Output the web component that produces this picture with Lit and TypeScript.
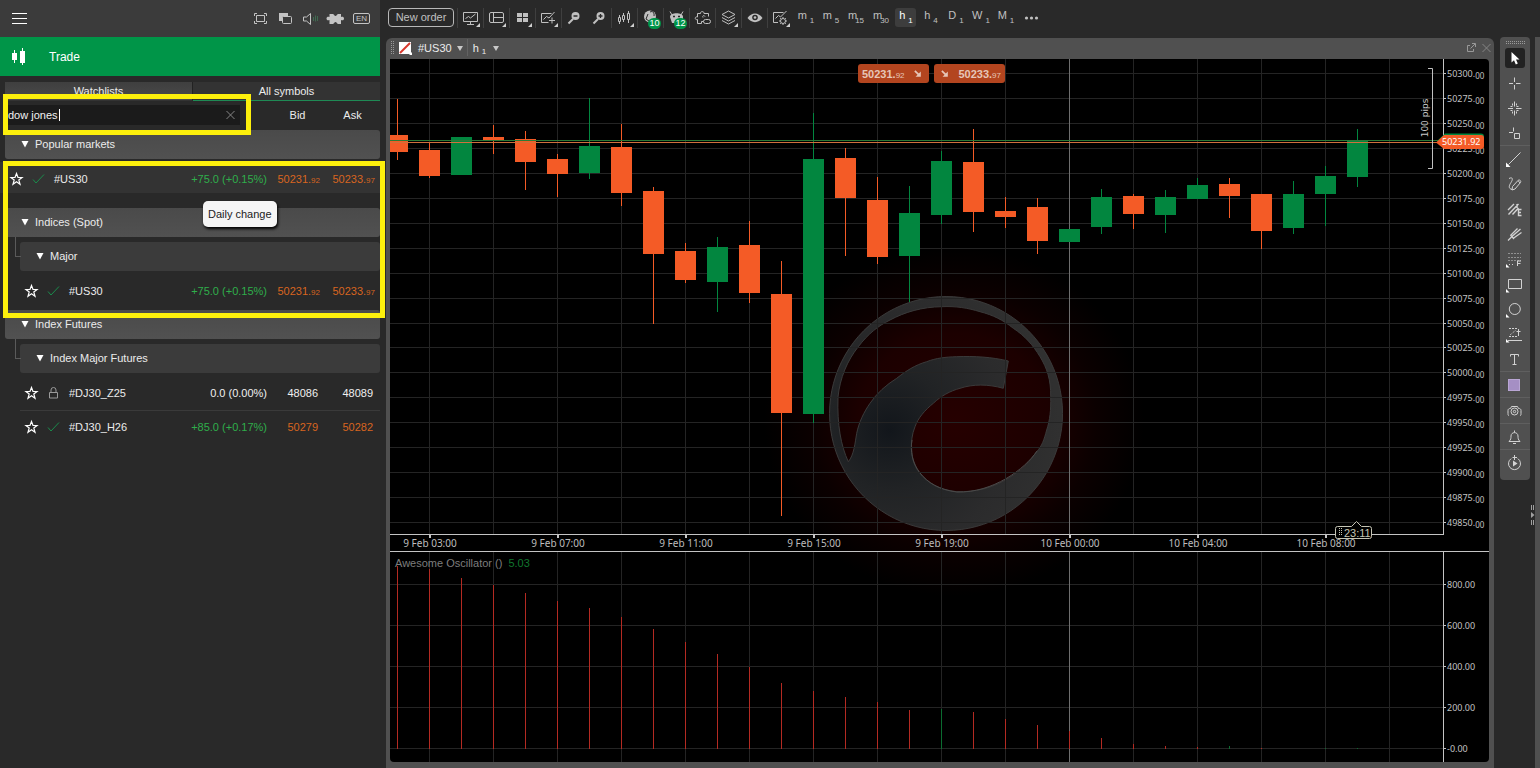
import { LitElement, html, svg, css, nothing } from "lit";
import { customElement, property } from "lit/decorators.js";
import { classMap } from "lit/directives/class-map.js";

/* ---------- icons, 20x20 grid ---------- */

const corner = svg`<path d="M19 15v4h-4z" fill="#d0d0d0" stroke="none"/>`;
const leftCorner = svg`<path d="M1 15v3.500h3.500z" fill="#fff" stroke="none"/>`;

const icons: Record<string, unknown> = {
  menu: svg`<path d="M3 4.500h15M3 9.500h15M3 14.500h15" stroke="#fff"/>`,
  fullscreen: svg`<path d="M6.500 6.500h8v6h-8zM4.500 7V4.500H7M14 4.500h2.500V7M16.500 12v2.500H14M7 14.500H4.500V12"/>`,
  detach: svg`<rect x="4" y="4" width="9" height="8" fill="currentColor" stroke="none"/><rect x="7.500" y="7.500" width="9" height="7" rx="1" fill="#3b3b3b"/>`,
  sound: svg`<path d="M3.500 8v4h3l4 3.500v-11l-4 3.500z"/><path d="M13.500 8v4M15.500 6.500v6M17.500 7v5" stroke="#3f6a50"/>`,
  puzzle: svg`<path d="M4.500 5H8c1.200.2 1.200 2 2.500 2s1.300-1.800 2.500-2h3v3c1-.6 3-.6 3 1.500s-2 2.100-3 1.500V15h-3c-1.200-.2-1.200-2-2.500-2s-1.300 1.800-2.500 2H4.500v-4c-1 .6-3 .6-3-1.500S3.500 7.400 4.500 8z" fill="currentColor" stroke="none"/>`,
  candles: svg`<path d="M5.500 3v13M13.500 1v17" stroke="#fff"/><path d="M3 6h5v7H3zM11 4h5v12h-5z" fill="#fff" stroke="none"/>`,
  star: svg`<path d="M9.500 4.500l1.500 4h4l-3.200 2.500 1.200 4.200-3.500-2.500-3.500 2.500 1.200-4.200-3.200-2.500h4z" stroke="#fff" stroke-width="1.200"/>`,
  check: svg`<path d="M4 10.500l3 3.500 8-8.500" stroke="#1a8c4c"/>`,
  lock: svg`<path d="M5.500 9.500h8v5.500h-8zM7 9.500V7a2.500 2.500 0 0 1 5 0v2.500" stroke="#9a9a9a"/>`,
  clear: svg`<path d="M6.500 6l8 8M14.500 6l-8 8" stroke="#858585"/>`,
  screen: svg`<path d="M2.500 4.500h14v9h-14zM9.500 14v2.500M6 16.500h7"/><path d="M4.500 10.500l3-2 2 1.500 5-4"/>${corner}`,
  layout: svg`<rect x="2.500" y="4.500" width="14" height="10" rx="1.500"/><path d="M6.500 4.500v10M6.500 9.500h10"/>${corner}`,
  tiles: svg`<path d="M4 5h5v4H4zM10 5h5v4h-5zM4 10h5v4H4zM10 10h5v4h-5z" fill="currentColor" stroke="none"/>${corner}`,
  indicator: svg`<path d="M9.500 14.500h-7v-9h10"/><path d="M4.500 11.500l3-3 2.500 1.500 5.500-6M13 9.500v6M10 12.500h6"/>${corner}`,
  zoomOut: svg`<circle cx="11.500" cy="8" r="4" fill="currentColor" stroke="none"/><path d="M9 11l-4.500 4.500" stroke-width="2"/><path d="M9.500 8h4" stroke="#292929" stroke-width="1.500"/>`,
  zoomIn: svg`<circle cx="11.500" cy="8" r="4" fill="currentColor" stroke="none"/><path d="M9 11l-4.500 4.500" stroke-width="2"/><path d="M9.500 8h4M11.500 6v4" stroke="#292929" stroke-width="1.300"/>`,
  chartType: svg`<path d="M4.500 7v9M8.500 5v9M13.500 3v12"/><path d="M3.500 9.500h2v4h-2zM7.500 7.500h2v4h-2zM12.500 5.500h2v6h-2z" fill="#292929"/>${corner}`,
  robots: svg`<circle cx="9" cy="8.500" r="6" fill="currentColor" stroke="none"/><path d="M9 4c3-1.500 4.500 1 4 4M7 6l-2 5 3 2" stroke="#292929"/>`,
  droid: svg`<path d="M3 9c0-5 13-5 13 0v6H5z" fill="currentColor" stroke="none"/><path d="M5 7L3 3.500M14 7l2-3.500"/><path d="M6 8.500h2M11 8.500h2" stroke="#292929" stroke-width="1.500"/>`,
  plugin: svg`<path d="M4.500 5.500h3c-.5-2.500 4-2.500 3.500 0h4.500v3M4.500 5.500V9c-3-1-3 3.500 0 2.500v4h4v-2h2"/><rect x="10.500" y="11.500" width="7" height="4" rx="2"/><path d="M12 8.500c-1-2-3-.5-2 1"/>`,
  layers: svg`<path d="M9.500 3l6.500 3.500-6.500 3.500-6.500-3.500zM3 9.500l6.500 3.500 6.500-3.500M3 12.500l6.500 3.500 6.500-3.500"/>${corner}`,
  eye: svg`<path d="M2.500 10c4-6 11-6 15 0-4 5.500-11 5.500-15 0z" fill="currentColor" stroke="none"/><circle cx="10" cy="9.500" r="2.800" fill="#292929" stroke="none"/><circle cx="10" cy="9.500" r="1.300" fill="currentColor" stroke="none"/>`,
  chartSettings: svg`<path d="M7 14.500H2.500v-10h10"/><path d="M4.500 10.500l3-3 2 1.500 6-6"/><circle cx="12" cy="13" r="2.500"/><path d="M12 9v1.500M12 15.500V17M8 13h1.500M14.500 13H16M9.200 10.200l1 1M13.800 14.800l1 1M14.800 10.200l-1 1M10.200 14.800l-1 1"/>${corner}`,
  more: svg`<circle cx="4.500" cy="10" r="1.600" fill="currentColor" stroke="none"/><circle cx="9.500" cy="10" r="1.600" fill="currentColor" stroke="none"/><circle cx="14.500" cy="10" r="1.600" fill="currentColor" stroke="none"/>`,
  popout: svg`<path d="M9 7.500H6.500v6h6V11M9.500 10.500l4.500-4.500M11 5.500h3.500V9"/>`,
  sell: svg`<path d="M5.500 5.500l5.500 5.500" stroke-width="2.500"/><path d="M14 6.500V14H6.500z" fill="currentColor" stroke="none"/>`,
  cursor: svg`<path d="M6.500 4v10.500l2.500-2.300 1.800 4.200 2-.9-1.800-4h3.500z" fill="#fff" stroke="none"/>`,
  cross: svg`<path d="M9.500 4.500v4.500M9.500 12v4.500M4 10.500h4M11 10.500h4.500"/>`,
  crossDots: svg`<path d="M9.500 3.500v5M9.500 12.500v5M3 10.500h5M11 10.500h5.500"/><path d="M7.500 5.500v3h-3M11.500 5.500v3h3M7.500 15.500v-3h-3M11.500 15.500v-3h3" stroke-dasharray="2 1"/>`,
  crossBox: svg`<path d="M8.500 4.500v4M4 9.500h4M9.500 10.500h5v5h-5z"/>`,
  line: svg`<path d="M3.500 15.500l12-12"/><path d="M1 13.500V18h4.500z" fill="#fff" stroke="none"/>`,
  pencil: svg`<path d="M4 4.500c4-2 4 1 2 4s-3 6 1 7M7.500 12.500l5.500-6c1.500-1.500 3.500.5 2.500 2L10 15l-3 1zM13 6.500l2 2.500"/>`,
  fib: svg`<path d="M3 11l6-6M3.500 15.500l10-10.500M7.500 15.500l6-6.500M12 5v4M16.500 10.500h-3v6h3M13.500 13.500h2.500" stroke-width="1.400"/>`,
  fork: svg`<path d="M3 16.500l5-5M5.500 11.500l7-7M8 14.500l8.500-6M7.500 12l8-7M5.500 11l3.500 4" stroke-width="1.300"/>`,
  fibLevels: svg`<path d="M3.500 4.500H16M3.500 8.500H16M3.500 11.500H16M4 15.500h6" stroke-dasharray="1 2"/><path d="M12.500 17v-5h3.500M12.500 14.500h3"/>${leftCorner}`,
  rect: svg`<path d="M3.500 5.500h13v9h-13z"/>${leftCorner}`,
  circle: svg`<circle cx="9.800" cy="10" r="5.500"/>${leftCorner}`,
  risk: svg`<path d="M4 4.500h8M4 12.500h8" stroke-dasharray="2 1"/><path d="M5 11l6-5" stroke-dasharray="1 1"/><path d="M13.500 12V5M11.500 7.500h4M3 16.500h14"/>${leftCorner}`,
  text: svg`<path d="M5.500 7.500v-2h8v2M9.500 5.500v10M7.500 15.500h4"/>`,
  swatch: svg`<rect x="3.500" y="4.500" width="11" height="11" fill="#a58fc4" stroke="#b9a6d4"/>`,
  camera: svg`<path d="M4 14.500c-1 0-1-1-1-2v-3c0-1.500 1-2 2.500-2l1-2h6l1 2c1.500 0 2.500.5 2.500 2v3c0 1 0 2-1 2"/><circle cx="9.500" cy="10.500" r="3.500"/><circle cx="9.500" cy="10.500" r="1.200"/>`,
  bell: svg`<path d="M4 14.500h11c-2-2-2-3.500-2-5.500 0-4.500-7-4.500-7 0 0 2 0 3.500-2 5.500zM8 16.500h3M9.500 3.500v2"/>`,
  replay: svg`<path d="M6.200 5.600a6 6 0 1 0 6.600 0M7.500 4.500h4.500M9.500 2v5"/><path d="M8 7.500l4.500 3-4.500 3z" fill="currentColor" stroke="none"/>`,
};

const icon = (name: string) =>
  html`<svg class="icon" viewBox="0 0 20 20" width="20" height="20" aria-hidden="true">${icons[name]}</svg>`;

const shared = css`
  * {
    box-sizing: border-box;
  }
  button {
    font: inherit;
    color: inherit;
    background: none;
    border: 0;
    padding: 0;
    cursor: pointer;
    display: flex;
    align-items: center;
    justify-content: center;
  }
  .icon {
    display: block;
    flex: none;
    fill: none;
    stroke: currentColor;
  }
  small {
    font-size: 8px;
  }
`;

/* ---------- left panel ---------- */

interface Quote {
  symbol: string;
  change: string;
  bid: [string, string?];
  ask: [string, string?];
  closed?: boolean;
  nested?: boolean;
}
interface Group {
  title: string;
  sub?: string;
  quotes: Quote[];
}

const us30: Quote = {
  symbol: "#US30",
  change: "+75.0 (+0.15%)",
  bid: ["50231.", "92"],
  ask: ["50233.", "97"],
};

const groups: Group[] = [
  { title: "Popular markets", quotes: [us30] },
  { title: "Indices (Spot)", sub: "Major", quotes: [{ ...us30, nested: true }] },
  {
    title: "Index Futures",
    sub: "Index Major Futures",
    quotes: [
      { symbol: "#DJ30_Z25", change: "0.0 (0.00%)", bid: ["48086"], ask: ["48089"], closed: true, nested: true },
      { symbol: "#DJ30_H26", change: "+85.0 (+0.17%)", bid: ["50279"], ask: ["50282"], nested: true },
    ],
  },
];

@customElement("trade-panel")
export class TradePanel extends LitElement {
  static styles = [
    shared,
    css`
      :host {
        display: block;
        position: relative;
        width: 380px;
        flex: none;
        color: #ececec;
      }
      .top {
        display: flex;
        align-items: center;
        gap: 5px;
        height: 37px;
        padding: 0 9px;
        background: #3b3b3b;
        color: #c4c4c4;
      }
      .menu {
        margin-right: auto;
      }
      .lang {
        width: 17px;
        height: 11px;
        margin: 0 1px 0 3px;
        border: 1px solid #c4c4c4;
        border-radius: 2px;
        font-size: 8px;
        line-height: 9px;
      }
      .trade {
        display: flex;
        align-items: center;
        gap: 20px;
        height: 39px;
        padding: 0 9px;
        background: #009548;
        color: #fff;
        font-size: 12px;
        font-weight: 400;
        margin: 0;
      }
      .tabs {
        display: flex;
        margin: 6px 0 0 5px;
      }
      .tab {
        flex: 1;
        height: 19px;
        background: #333;
        border-bottom: 1px solid #1f8a55;
      }
      .tab.first {
        background: linear-gradient(#3f3f3f, #4a4a4a);
        border-bottom-color: #333;
        border-right: 1px solid #222;
      }
      table {
        width: 100%;
        border-spacing: 0;
        table-layout: fixed;
      }
      th,
      td {
        padding: 0;
        font-weight: 400;
        text-align: left;
        white-space: nowrap;
      }
      .c-change {
        width: 90px;
      }
      .c-price {
        width: 55px;
      }
      thead th {
        height: 29px;
        padding-bottom: 1px;
      }
      .field {
        position: relative;
        display: flex;
        align-items: center;
        width: 232px;
        height: 20px;
        margin-left: 8px;
        background: #1b1b1b;
      }
      .field input {
        flex: 1;
        min-width: 0;
        height: 20px;
        padding: 0;
        border: 0;
        outline: 0;
        background: transparent;
        color: #f2f2f2;
        font: inherit;
      }
      .caret {
        position: absolute;
        left: 51px;
        top: 4px;
        width: 1px;
        height: 12px;
        background: #fff;
      }
      th.head {
        text-align: center;
      }
      .group {
        width: 100%;
        height: 29px;
        padding: 0 0 2px 15px;
        justify-content: flex-start;
        gap: 5px;
        background: linear-gradient(#4a4a4a, #515151);
        border-radius: 3px;
      }
      .arrow {
        width: 10px;
        height: 8px;
        fill: #fff;
      }
      .in {
        padding-left: 5px;
      }
      .sub {
        position: relative;
        padding: 5px 0 0 20px;
      }
      .sub::before {
        content: "";
        position: absolute;
        left: 15px;
        top: 0;
        width: 5px;
        height: 19px;
        border: solid #5a5a5a;
        border-width: 0 0 1px 1px;
      }
      .sub .group {
        background: #3b3b3b;
      }
      .gap td {
        height: 3px;
      }
      .gap.end td {
        height: 2px;
      }
      .gap.wide td {
        height: 12px;
      }
      .row td {
        height: 34px;
      }
      .lit td {
        background: linear-gradient(#333 31px, transparent 31px);
      }
      .row + .row td {
        background: linear-gradient(#3a3a3a 1px, transparent 1px) no-repeat;
      }
      .row + .row .name {
        background-position: 20px 0;
      }
      .cell {
        display: flex;
        align-items: center;
        gap: 2px;
        padding-left: 7px;
      }
      .nested .cell {
        padding-left: 22px;
      }
      .label {
        padding-left: 3px;
      }
      .num {
        text-align: right;
        padding-right: 7px;
        color: #d8651f;
      }
      .num.frac {
        padding-right: 5px;
      }
      .chg {
        text-align: right;
        padding-right: 3px;
        color: #2fae4b;
      }
      .closed .chg,
      .closed .num {
        color: #f0f0f0;
      }
      .tip {
        position: absolute;
        left: 203px;
        top: 201px;
        padding: 0 5px;
        height: 26px;
        line-height: 26px;
        border-radius: 5px;
        background: #f5f5f5;
        color: #222;
        box-shadow: 1px 2px 3px #000;
      }
      .mark {
        position: absolute;
        border: 5px solid #fdf00c;
        pointer-events: none;
      }
      .mark.search {
        left: 3px;
        top: 94px;
        width: 248px;
        height: 41px;
      }
      .mark.results {
        left: 3px;
        top: 161px;
        width: 382px;
        height: 157px;
        z-index: 2;
      }
    `,
  ];

  private groupButton(title: string) {
    return html`<button class="group">
      <svg class="arrow" viewBox="0 0 10 8" aria-hidden="true"><path d="M1.500 1h7L5 7.500z" /></svg>${title}
    </button>`;
  }

  private price(p: [string, string?]) {
    return html`<td class=${classMap({ num: true, frac: !!p[1] })}>${p[0]}${p[1] ? html`<small>${p[1]}</small>` : nothing}</td>`;
  }

  private row(q: Quote) {
    return html`<tr class=${classMap({ row: true, nested: !!q.nested, closed: !!q.closed, lit: !q.nested })}>
      <td class="name">
        <div class="cell">
          <button aria-label="Add to favourites">${icon("star")}</button>
          ${icon(q.closed ? "lock" : "check")}<span class="label">${q.symbol}</span>
        </div>
      </td>
      <td class="chg">${q.change}</td>
      ${this.price(q.bid)}${this.price(q.ask)}
    </tr>`;
  }

  render() {
    return html`
      <div class="top">
        <button class="menu" aria-label="Menu">${icon("menu")}</button>
        ${["fullscreen", "detach", "sound", "puzzle"].map((n) => html`<button aria-label=${n}>${icon(n)}</button>`)}
        <button class="lang">EN</button>
      </div>
      <h1 class="trade">${icon("candles")}Trade</h1>
      <div class="tabs">
        <button class="tab first">Watchlists</button>
        <button class="tab">All symbols</button>
      </div>
      <table>
        <colgroup>
          <col />
          <col class="c-change" />
          <col class="c-price" />
          <col class="c-price" />
        </colgroup>
        <thead>
          <tr>
            <th colspan="2">
              <div class="field">
                <input type="text" aria-label="Search symbols" value="dow jones" />
                <span class="caret"></span>
                <button aria-label="Clear">${icon("clear")}</button>
              </div>
            </th>
            <th class="head">Bid</th>
            <th class="head">Ask</th>
          </tr>
        </thead>
        <tbody>
          ${groups.map(
            (g) => html`
              <tr><td class="in" colspan="4">${this.groupButton(g.title)}</td></tr>
              ${g.sub ? html`<tr><td class="sub" colspan="4">${this.groupButton(g.sub)}</td></tr>` : nothing}
              <tr class="gap"><td colspan="4"></td></tr>
              ${g.quotes.map((q) => this.row(q))}
              <tr class=${classMap({ gap: true, end: !!g.sub, wide: !g.sub })}><td colspan="4"></td></tr>
            `
          )}
        </tbody>
      </table>
      <div class="tip" role="tooltip">Daily change</div>
      <div class="mark search"></div>
      <div class="mark results"></div>
    `;
  }
}

/* ---------- chart ---------- */

/* [body top, body bottom, high, low, rising] on the pane's pixel scale, oldest first */
const bars: [number, number, number, number, number][] = [
  [76, 93, 40, 101, 0], [91, 117, 84, 119, 0], [78, 116, 78, 116, 1], [78, 81, 66, 95, 0],
  [80, 103, 72, 131, 0], [100, 115, 95, 138, 0], [87, 114, 39, 120, 1], [88, 134, 65, 147, 0],
  [132, 195, 128, 265, 0], [192, 221, 184, 224, 0], [188, 223, 178, 253, 1], [186, 234, 162, 244, 0],
  [235, 354, 202, 457, 0], [100, 355, 54, 364, 1], [99, 139, 89, 197, 0], [141, 198, 118, 205, 0],
  [154, 197, 127, 243, 1], [102, 156, 92, 165, 1], [103, 153, 70, 173, 0], [152, 158, 138, 169, 0],
  [148, 182, 139, 195, 0], [170, 183, 170, 183, 1], [138, 168, 130, 175, 1], [137, 155, 135, 170, 0],
  [138, 156, 131, 174, 1], [126, 140, 119, 140, 1], [125, 137, 119, 159, 0], [135, 172, 135, 190, 0],
  [135, 169, 122, 175, 1], [117, 135, 107, 167, 1], [81, 118, 70, 128, 1],
];

const awesome = [
  183, 180, 171, 164, 156, 148, 141, 132, 120, 107, 95, 82, 66, 58, 52, 47, 39, -40, 37, 30, 24, 18, 11, 5, 3, 2, -3, 1, 0,
  -1, -1,
];

const times = [
  "9 Feb 03:00", "9 Feb 07:00", "9 Feb 11:00", "9 Feb 15:00", "9 Feb 19:00", "10 Feb 00:00", "10 Feb 04:00", "10 Feb 08:00",
];

const STEP = 32;
const LAST = -132;
const AXIS = -46;
const UP = "#02863f";
const DOWN = "#f45b26";

@customElement("price-chart")
export class PriceChart extends LitElement {
  static styles = [
    shared,
    css`
      :host {
        display: flex;
        flex-direction: column;
        flex: 1;
        min-width: 0;
        padding: 0 5px 6px 4px;
        background: #505050;
        border-radius: 6px 6px 0 0;
        color: #ececec;
      }
      .bar {
        display: flex;
        align-items: center;
        height: 21px;
        padding-bottom: 2px;
        flex: none;
      }
      .grip {
        width: 4px;
        height: 14px;
        background: conic-gradient(#9a9a9a 25%, transparent 0) 0 0 / 2px 2px;
      }
      .flag {
        width: 14px;
        height: 14px;
        margin: 0 6px 0 4px;
      }
      .pick {
        gap: 5px;
      }
      .tf {
        gap: 3px;
        margin-left: 4px;
        padding-left: 5px;
        border-left: 1px solid #626262;
      }
      .tf small {
        padding: 8px 4px 0 0;
      }
      .arrow {
        width: 6px;
        height: 6px;
        fill: #c8c8c8;
      }
      .spacer {
        flex: 1;
      }
      .win {
        color: #989898;
        width: 15px;
      }
      .win:last-child {
        margin-right: -4px;
      }
      .stage {
        position: relative;
        flex: 1;
        min-height: 620px;
        background: #000;
        border-radius: 0 4px 4px 4px;
        overflow: hidden;
      }
      .canvas {
        position: absolute;
        inset: 0;
        display: block;
        width: 100%;
        height: 100%;
      }
      .axis {
        font: 9px "Noto Sans", sans-serif;
        fill: #c2c2c2;
      }
      .time {
        font: 10px "Noto Sans", sans-serif;
        fill: #bdbdbd;
        text-anchor: middle;
      }
      .pips {
        font: 9px "DejaVu Sans", sans-serif;
        fill: #c8c8c8;
        text-anchor: middle;
      }
      .tag {
        font: 9px "Noto Sans", sans-serif;
        fill: #fff;
      }
      .clock {
        font: 11px "Liberation Sans", sans-serif;
        fill: #c4c4b4;
      }
      .minor {
        font-size: 8px;
      }
      .study {
        position: absolute;
        left: 5px;
        top: 497px;
        display: flex;
        gap: 6px;
        color: #7d7d7d;
        line-height: 14px;
      }
      .study span {
        color: #11762f;
      }
      .deal {
        position: absolute;
        left: 0;
        right: 16px;
        top: 5px;
        display: flex;
        justify-content: center;
        gap: 5px;
      }
      .deal button {
        width: 71px;
        height: 19px;
        padding: 0 4px;
        justify-content: space-between;
        border-radius: 3px;
        background: #b3451f;
        color: #e6c6b8;
        font-weight: 700;
      }
      .deal .icon {
        width: 14px;
        height: 14px;
      }
      .deal small {
        font-weight: 400;
      }
    `,
  ];

  private grid() {
    const v = Array.from({ length: 24 }, (_, i) => -99.5 - i * 64);
    const h = Array.from({ length: 19 }, (_, i) => 14.5 + Math.round(i * 24.95));
    const low = [525.5, 566.5, 607.5, 648.5, 689.5];
    return svg`
      <g stroke="#242424">
        ${v.map((x) => svg`<path d="M${x} 0V475M${x} 493V1400"/>`)}
        ${h.concat(low).map((y) => svg`<path d="M-3000 ${y}H${AXIS}"/>`)}
      </g>
      <path d="M-419.500 0V475M-419.500 493V1400" stroke="#6e6e6e"/>`;
  }

  private logo() {
    return svg`
      <ellipse cx="-535" cy="362" rx="190" ry="175" fill="url(#glow)"/>
      <g transform="translate(-1489 -59)">
        <path fill-rule="evenodd" fill="url(#metal)" stroke="#3a3a3a" stroke-width="1"
          d="M946 296.500a116.500 117 0 1 0 .1 0z
          M848.300 461.700C841 446 837 425 838 397C840 378 847 361 858.300 346.700C868 334 878 326 890 320C905 312 922 307 941.700 306.700C956 306 968 308 980 311.700C993 315 1003 320 1013.300 328.300C1025 336 1033 345 1040 356.700C1047 368 1051 380 1050.700 396.700C1051 410 1050 420 1046.700 430C1044 440 1042 446 1036.700 451.700C1030 461 1023 469 1013.300 475C1003 482 994 486 983.300 489C974 491 966 492 956.700 491.700C944 490 935 487 926.700 480C917 472 912 463 911.700 450C911 442 912 434 915 426.700C918 418 925 410 933.300 403.300C941 396 950 391 960 388.300C973 384 988 384 1003.300 388.300L1008.300 361C992 357 974 356 956.700 356.700C946 357 936 358 926.700 361.700C915 365 906 371 896.700 378.300C886 385 877 393 870 403.300C864 412 859 422 856.700 433.300C855 443 854 455 848.300 461.700z"/>
        <path d="M912 440C908 462 922 488 957 492C993 493 1025 469 1037 451" fill="none" stroke="#4a4a4a"/>
      </g>`;
  }

  private candles() {
    const n = bars.length - 1;
    return bars.map(([top, bottom, high, low, up], i) => {
      const x = LAST - (n - i) * STEP;
      return svg`<g fill="${up ? UP : DOWN}">
        <rect x="${x}" y="${high}" width="1" height="${low - high}"/>
        <rect x="${x - 10}" y="${top}" width="21" height="${bottom - top}"/>
      </g>`;
    });
  }

  private oscillator() {
    const n = awesome.length - 1;
    return awesome.map((v, i) => {
      const h = Math.abs(v);
      return svg`<rect x="${LAST - (n - i) * STEP}" y="${690 - h}" width="1" height="${h}" fill="${v < 0 ? "#0b6c30" : "#b42a22"}"/>`;
    });
  }

  private axes() {
    const prices = Array.from({ length: 19 }, (_, i) => 50300 - i * 25);
    return svg`
      <g stroke="#c4c4c4">
        <path d="M-3000 475.500H${AXIS}M-45.500 0V476M-3000 492.500H0M-45.500 493V1400"/>
        ${prices.map((_, i) => svg`<path d="M-45 ${14.5 + Math.round(i * 24.95)}h2"/>`)}
        ${[525.5, 566.5, 607.5, 648.5, 689.5].map((y) => svg`<path d="M-45 ${y}h2"/>`)}
        ${times.map((_, i) => svg`<path d="M${-163 - i * 128} 475v4" stroke-width="2"/>`)}
      </g>
      ${prices.map((p, i) => svg`<text class="axis" x="-42" y="${18 + Math.round(i * 24.95)}">${p}.<tspan class="minor" dy="2">00</tspan></text>`)}
      ${["800.00", "600.00", "400.00", "200.00", "-0.00"].map((t, i) => svg`<text class="axis" x="-42" y="${529 + i * 41}">${t}</text>`)}
      ${times.map((t, i) => svg`<text class="time" x="${-163 - (times.length - 1 - i) * 128}" y="488">${t}</text>`)}`;
  }

  private overlays() {
    return svg`
      <rect x="-3000" y="81" width="2949" height="1" fill="#2c7a35"/>
      <rect x="-3000" y="83" width="2949" height="1" fill="#d0703c"/>
      <path d="M-61 9.500h4.500v100h-4.500" fill="none" stroke="#c0c0c0"/>
      <text class="pips" transform="translate(-61 59) rotate(-90)">100 pips</text>
      <path d="M-52 82l8-7.500h36q3 0 3 3v9h-39z" fill="${UP}"/>
      <path d="M-53 83.500l8-7.500h37q3 0 3 3v8q0 3-3 3h-37z" fill="${DOWN}"/>
      <text class="tag" x="-47" y="86">50231.92</text>
      <path d="M-153.500 469.500q0-2 2-2h14l5-5 5 5h8q2 0 2 2v8q0 2-2 2h-32q-2 0-2-2z" fill="#000" stroke="#c4c4b4"/>
      <path d="M-149.500 469v8M-147.500 469v8" stroke="#c4c4b4" stroke-dasharray="1 1"/>
      <text class="clock" x="-145" y="478">23:11</text>`;
  }

  render() {
    const arrow = html`<svg class="arrow" viewBox="0 0 6 6" aria-hidden="true"><path d="M0 1h6L3 6z" /></svg>`;
    return html`
      <div class="bar">
        <span class="grip"></span>
        <svg class="flag" viewBox="0 0 14 14" aria-hidden="true">
          <rect x="1" y="1" width="12" height="12" fill="#fff" />
          <path d="M2 12L12 2" stroke="#d8382c" stroke-width="2" />
          <path d="M14 11v3h-3z" fill="#fff" />
        </svg>
        <button class="pick">#US30 ${arrow}</button>
        <button class="tf">h<small>1</small>${arrow}</button>
        <span class="spacer"></span>
        <button class="win" aria-label="Detach chart">${icon("popout")}</button>
        <button class="win" aria-label="Close chart">${icon("clear")}</button>
      </div>
      <div class="stage">
        <svg class="canvas" role="img" aria-label="#US30 hourly candles with Awesome Oscillator">
          <defs>
            <radialGradient id="glow">
              <stop offset="0" stop-color="#260000" />
              <stop offset=".5" stop-color="#1c0000" />
              <stop offset=".75" stop-color="#0b0000" />
              <stop offset="1" stop-color="#000" />
            </radialGradient>
            <radialGradient id="metal" gradientUnits="userSpaceOnUse" cx="890" cy="430" r="170">
              <stop offset="0" stop-color="#12161b" />
              <stop offset=".35" stop-color="#212325" />
              <stop offset=".7" stop-color="#2b2b2c" />
              <stop offset="1" stop-color="#303030" />
            </radialGradient>
          </defs>
          <svg x="100%" y="0" overflow="visible">
            ${this.logo()}${this.grid()}${this.oscillator()}${this.candles()}${this.axes()}${this.overlays()}
          </svg>
        </svg>
        <div class="deal">
          <button><span>50231.<small>92</small></span>${icon("sell")}</button>
          <button>${icon("sell")}<span>50233.<small>97</small></span></button>
        </div>
        <div class="study">Awesome Oscillator ()<span>5.03</span></div>
      </div>
    `;
  }
}

/* ---------- shell ---------- */

const tools: { name: string; badge?: string; plain?: boolean; narrow?: boolean }[] = [
  { name: "screen" }, { name: "layout" }, { name: "tiles" }, { name: "indicator" },
  { name: "zoomOut", narrow: true }, { name: "zoomIn", plain: true, narrow: true },
  { name: "chartType" }, { name: "robots", badge: "10" }, { name: "droid", badge: "12" },
  { name: "plugin" }, { name: "layers" }, { name: "eye" }, { name: "chartSettings" },
];
const frames: [string, string][] = [
  ["m", "1"], ["m", "5"], ["m", "15"], ["m", "30"], ["h", "1"], ["h", "4"], ["D", "1"], ["W", "1"], ["M", "1"],
];
const palette = [
  ["cursor", "cross", "crossDots", "crossBox"],
  ["line", "pencil", "fib", "fork", "fibLevels", "rect", "circle", "risk", "text"],
  ["swatch"], ["camera"], ["bell"], ["replay"],
];

@customElement("app-root")
export class AppRoot extends LitElement {
  static styles = [
    shared,
    css`
      :host {
        display: flex;
        min-height: 100vh;
        background: #292929;
        font: 11px "Liberation Sans", Arial, sans-serif;
        color: #ececec;
        overflow: hidden;
      }
      .main {
        flex: 1;
        min-width: 0;
        display: flex;
        flex-direction: column;
        margin-left: 6px;
      }
      .toolbar {
        display: flex;
        align-items: center;
        height: 38px;
        padding: 0 0 3px 2px;
        color: #c0c0c0;
      }
      .order {
        width: 66px;
        height: 19px;
        margin-right: 3px;
        padding-bottom: 1px;
        border: 1px solid #b8b8b8;
        border-radius: 4px;
      }
      .tool {
        position: relative;
        width: 26px;
        height: 20px;
        border-left: 1px solid #3f3f3f;
      }
      .narrow {
        width: 25px;
      }
      .plain {
        border-color: transparent;
      }
      .badge {
        position: absolute;
        right: 2px;
        bottom: -1px;
        width: 13px;
        height: 11px;
        border-radius: 6px;
        background: #009548;
        color: #fff;
        font-size: 9px;
        line-height: 11px;
        text-align: center;
      }
      .frame {
        width: 25px;
        height: 20px;
      }
      .frame span {
        display: flex;
        gap: 3px;
        height: 19px;
        padding: 1px 3px 0 4px;
      }
      .frame small {
        padding-top: 7px;
      }
      .frame .wide {
        gap: 0;
      }
      .frame .wide small {
        margin-left: -2px;
      }
      .frame.on {
        color: #fff;
      }
      .frame.on span {
        border-radius: 3px;
        background: #3d3d3d;
      }
      .body {
        flex: 1;
        display: flex;
      }
      .side {
        margin-left: 6px;
        width: 40px;
        display: flex;
        align-items: flex-start;
        padding-top: 37px;
        justify-content: space-between;
      }
      .palette {
        width: 30px;
        padding-bottom: 5px;
        border-radius: 4px;
        background: #505050;
        color: #d2d2d2;
      }
      .dots {
        height: 8px;
        padding: 4px 5px 0;
        background: conic-gradient(#9a9a9a 25%, transparent 0) content-box 0 0 / 2px 2px;
      }
      .set + .set {
        border-top: 1px solid #5f5f5f;
      }
      .set button {
        width: 30px;
        height: 25px;
      }
      .set .active .icon {
        background: #222;
        border-radius: 3px;
      }
      .edge {
        align-self: stretch;
        justify-content: flex-start;
        width: 9px;
        color: #a0a0a0;
        background: linear-gradient(90deg, transparent 4px, #505050 4px);
      }
      .edge svg {
        flex: none;
        margin-bottom: -224px;
      }
    `,
  ];

  @property() active = "h1";

  render() {
    return html`
      <trade-panel></trade-panel>
      <main class="main">
        <div class="toolbar">
          <button class="order">New order</button>
          ${tools.map(
            (t) => html`<button class=${classMap({ tool: true, plain: !!t.plain, narrow: !!t.narrow })} aria-label=${t.name}>
              ${icon(t.name)}${t.badge ? html`<span class="badge">${t.badge}</span>` : nothing}
            </button>`
          )}
          ${frames.map(
            ([a, b]) => html`<button class=${classMap({ frame: true, on: a + b === this.active })}>
              <span class=${classMap({ wide: b.length > 1 })}>${a}<small>${b}</small></span>
            </button>`
          )}
          <button class="tool plain" aria-label="More">${icon("more")}</button>
        </div>
        <div class="body"><price-chart></price-chart></div>
      </main>
      <aside class="side">
        <div class="palette">
          <div class="dots"></div>
          ${palette.map(
            (set) => html`<div class="set">
              ${set.map(
                (n) => html`<button class=${classMap({ active: n === "cursor" })} aria-label=${n}>${icon(n)}</button>`
              )}
            </div>`
          )}
        </div>
        <button class="edge" aria-label="Expand side panel">
          <svg width="5" height="20" viewBox="0 0 5 20" aria-hidden="true">
            <path d="M.5 0v5M2.500 0v5M.5 15v5M2.500 15v5" stroke="currentColor" />
            <path d="M0 7l3.500 3L0 13z" fill="currentColor" />
          </svg>
        </button>
      </aside>
    `;
  }
}
